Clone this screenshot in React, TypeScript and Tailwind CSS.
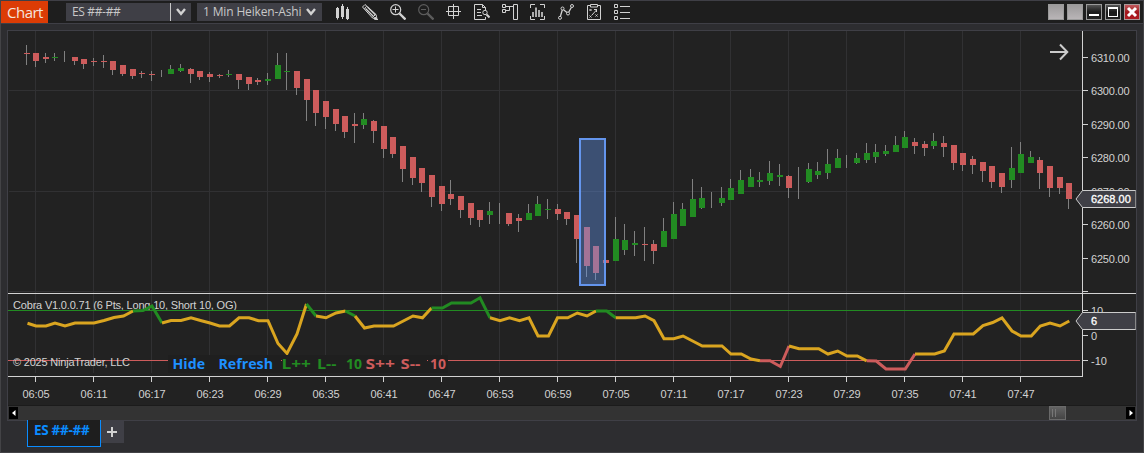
import type { ReactNode } from 'react';

// x, high, body top, body bottom, low, direction (1 up, -1 down, 0 flat)
const candles = [
  [26, 45, 53, 54, 65, -1],
  [35, 53, 53, 61, 67, -1],
  [45, 53, 57, 59, 63, -1],
  [54, 53, 57, 58, 61, 1],
  [64, 51, 57, 57, 62, 0],
  [74, 57, 57, 61, 65, -1],
  [83, 59, 59, 64, 69, -1],
  [93, 58, 61, 62, 66, -1],
  [103, 55, 61, 62, 68, -1],
  [112, 61, 61, 70, 75, -1],
  [122, 65, 65, 74, 76, -1],
  [132, 69, 69, 76, 79, -1],
  [141, 71, 73, 74, 78, -1],
  [151, 71, 74, 75, 81, -1],
  [161, 70, 74, 74, 77, 0],
  [170, 65, 69, 74, 74, 1],
  [180, 64, 68, 71, 72, 1],
  [190, 68, 69, 74, 83, -1],
  [199, 71, 71, 77, 80, -1],
  [209, 72, 74, 77, 82, -1],
  [219, 74, 75, 76, 78, -1],
  [228, 70, 74, 75, 77, 1],
  [238, 74, 74, 80, 89, -1],
  [248, 77, 77, 84, 90, -1],
  [257, 78, 80, 82, 85, -1],
  [267, 73, 79, 81, 85, 1],
  [277, 53, 65, 79, 79, 1],
  [286, 53, 71, 72, 90, 1],
  [296, 71, 71, 88, 95, -1],
  [306, 79, 79, 100, 121, -1],
  [315, 90, 90, 113, 126, -1],
  [325, 101, 101, 117, 129, -1],
  [335, 109, 109, 124, 131, -1],
  [344, 116, 116, 132, 138, -1],
  [354, 113, 124, 126, 143, -1],
  [363, 113, 119, 125, 129, 1],
  [373, 120, 121, 131, 143, -1],
  [383, 126, 126, 149, 158, -1],
  [392, 137, 137, 154, 158, -1],
  [402, 146, 146, 169, 182, -1],
  [412, 157, 157, 178, 185, -1],
  [421, 168, 168, 183, 192, -1],
  [431, 175, 175, 197, 207, -1],
  [441, 186, 186, 204, 211, -1],
  [450, 180, 194, 199, 205, -1],
  [460, 196, 196, 210, 218, -1],
  [470, 203, 203, 218, 225, -1],
  [479, 210, 210, 220, 227, -1],
  [489, 202, 211, 215, 224, 1],
  [499, 203, 213, 213, 224, 0],
  [508, 213, 213, 224, 226, -1],
  [518, 214, 218, 221, 232, -1],
  [528, 204, 213, 220, 220, 1],
  [537, 196, 204, 216, 216, 1],
  [547, 199, 209, 210, 219, 1],
  [557, 204, 209, 214, 220, -1],
  [566, 212, 212, 219, 225, -1],
  [576, 215, 215, 239, 263, -1],
  [586, 227, 227, 266, 277, -1],
  [595, 246, 246, 273, 280, -1],
  [605, 250, 260, 263, 266, -1],
  [615, 217, 239, 261, 261, 1],
  [624, 224, 240, 250, 255, 1],
  [634, 231, 243, 245, 256, 1],
  [644, 227, 244, 245, 261, -1],
  [653, 240, 244, 251, 264, -1],
  [663, 218, 231, 247, 247, 1],
  [673, 202, 214, 239, 239, 1],
  [682, 203, 209, 226, 226, 1],
  [692, 179, 199, 217, 217, 1],
  [701, 187, 198, 208, 209, 1],
  [711, 192, 200, 200, 208, 0],
  [721, 187, 198, 203, 206, 1],
  [730, 179, 188, 200, 200, 1],
  [740, 170, 180, 194, 194, 1],
  [750, 169, 177, 187, 187, 1],
  [759, 172, 180, 182, 187, 1],
  [769, 161, 173, 181, 185, 1],
  [779, 164, 175, 177, 186, 1],
  [788, 175, 176, 188, 198, -1],
  [798, 167, 180, 180, 199, 0],
  [808, 163, 169, 182, 183, 1],
  [817, 162, 171, 175, 179, 1],
  [827, 149, 164, 173, 179, 1],
  [837, 149, 158, 168, 168, 1],
  [846, 155, 160, 160, 168, 0],
  [856, 153, 158, 163, 164, 1],
  [866, 143, 153, 160, 163, 1],
  [875, 144, 152, 157, 163, 1],
  [885, 145, 151, 154, 156, 1],
  [895, 136, 145, 152, 152, 1],
  [904, 131, 137, 148, 148, 1],
  [914, 138, 142, 146, 154, -1],
  [924, 141, 144, 148, 156, -1],
  [933, 133, 141, 146, 149, 1],
  [943, 136, 143, 147, 157, -1],
  [953, 145, 145, 163, 170, -1],
  [962, 153, 153, 165, 171, -1],
  [972, 156, 159, 165, 174, -1],
  [982, 162, 162, 171, 182, -1],
  [991, 166, 166, 182, 188, -1],
  [1001, 173, 173, 187, 193, -1],
  [1011, 147, 168, 180, 188, 1],
  [1020, 142, 154, 173, 173, 1],
  [1030, 151, 157, 163, 163, 1],
  [1039, 157, 160, 173, 189, -1],
  [1049, 166, 166, 188, 197, -1],
  [1059, 177, 177, 188, 194, -1],
  [1068, 183, 183, 199, 209, -1],
];

const GOLD = '#daa520';
const GREEN = '#228b22';
const RED = '#cd5c5c';

const cobra = [
  { color: GOLD, points: '27.5,323.3 36,326 46,326 55,323 65,326 75,323 94,323 104,320.5 114,317.5 123.5,316 133,311' },
  { color: GREEN, points: '133,311 143,310.5 152,306 162,323' },
  { color: GOLD, points: '162,323 171,320.5 181,320.5 191,317.8 200.5,320.5 210,323 219.5,326 229.5,326 239,317.8 249,317.8 258.5,320.7 268,320.7 278,343.5 287,353.5 297,334 306.5,304' },
  { color: GREEN, points: '306.5,304 316,316' },
  { color: GOLD, points: '316,316 326,317.8 336,313 345.5,311' },
  { color: GREEN, points: '345.5,311 355,316' },
  { color: GOLD, points: '355,316 364.5,328 374,326 393.5,326 413,316 422.5,317.8 431.5,308' },
  { color: GREEN, points: '431.5,308 442.5,308 451.5,303 471,303 480,297.8 490,317.8' },
  { color: GOLD, points: '490,317.8 500,320.7 509.5,317.8 519.5,320.7 529,317.8 538,336 548.5,336 557.5,317.8 567.7,317.8 577.3,313 587,316 596,311' },
  { color: GREEN, points: '596,311 606.7,311 615.7,317.8' },
  { color: GOLD, points: '615.7,317.8 635.7,317.8 645,316 654,320.7 664,338.7 673.7,338.7 683,336 702.3,346 722,346 731,354 741.3,354 751,359 760,360.8' },
  { color: RED, points: '760,360.8 770,360.8 780.3,366.5 789,346' },
  { color: GOLD, points: '789,346 799,348.7 818.7,348.7 828,354 837.7,351 847,356 857.3,356 866.7,360.8' },
  { color: RED, points: '866.7,360.8 876.3,361 886,369 905.3,369 915,354' },
  { color: GOLD, points: '915,354 934.7,354 944.3,351 954,334 973.3,334 983,325.7 992.7,322.5 1002,317.8 1012,331 1021,336 1031.3,336 1040.3,326 1050,323 1060,326 1069.3,321' },
];

const times = [
  { x: 35, label: '06:05' },
  { x: 93, label: '06:11' },
  { x: 151, label: '06:17' },
  { x: 209, label: '06:23' },
  { x: 267, label: '06:29' },
  { x: 325, label: '06:35' },
  { x: 383, label: '06:41' },
  { x: 441, label: '06:47' },
  { x: 499, label: '06:53' },
  { x: 557, label: '06:59' },
  { x: 615, label: '07:05' },
  { x: 673, label: '07:11' },
  { x: 730, label: '07:17' },
  { x: 788, label: '07:23' },
  { x: 846, label: '07:29' },
  { x: 904, label: '07:35' },
  { x: 962, label: '07:41' },
  { x: 1020, label: '07:47' },
];

const prices = [
  { y: 57, label: '6310.00' },
  { y: 90, label: '6300.00' },
  { y: 124, label: '6290.00' },
  { y: 157, label: '6280.00' },
  { y: 191, label: '6270.00' },
  { y: 224, label: '6260.00' },
  { y: 258, label: '6250.00' },
  { y: 291, label: '' },
  { y: 310, label: '10' },
  { y: 335, label: '0' },
  { y: 360, label: '-10' },
];

const legend = [
  { x: 172.5, width: 32.5, label: 'Hide', color: '#1e90ff' },
  { x: 218.5, width: 54.5, label: 'Refresh', color: '#1e90ff' },
  { x: 281.5, width: 29.5, label: 'L++', color: GREEN },
  { x: 317, width: 19.5, label: 'L--', color: GREEN },
  { x: 346, width: 16, label: '10', color: GREEN },
  { x: 365.5, width: 29.5, label: 'S++', color: RED },
  { x: 400.5, width: 20, label: 'S--', color: RED },
  { x: 430, width: 16, label: '10', color: RED },
];

const Icon = ({ children, dim }: { children: ReactNode; dim?: boolean }) => (
  <svg
    viewBox="0 0 16 16"
    className={dim ? 'size-4 text-[#5c5c5c]' : 'size-4 text-[#d2d2d2]'}
    fill="none"
    stroke="currentColor"
  >
    {children}
  </svg>
);

const ToolIcons = () => (
  <div className="flex gap-3 ml-3">
    <Icon>
      <path d="M2 4h3v10H2zM7 2h3v11H7zM12 5h3v10h-3z" fill="currentColor" stroke="none" />
      <path d="M3.5 3v12.5M8.5 0v15M13.5 3v13" />
    </Icon>
    <Icon>
      <path d="M.5 3 3 .5l11 10 1 4.5-4.5-1zM2.2 4.7l2.5-2.5M10.5 13.5l3-3" />
      <path d="m3.5 4.5 8 8M5.5 3l8 8" strokeWidth="1.3" />
      <path d="m13 13 3 3-4-1z" fill="currentColor" />
    </Icon>
    <Icon>
      <circle cx="5.7" cy="5.7" r="5" strokeWidth="1.2" />
      <path d="M5.5 2.5v6M2.5 5.5h6" />
      <path d="m9.5 9.5 6 6" strokeWidth="2.4" />
    </Icon>
    <Icon dim>
      <circle cx="5.7" cy="5.7" r="5" strokeWidth="1.2" />
      <path d="M3 5.5h5" />
      <path d="m9.5 9.5 6 6" strokeWidth="2.4" />
    </Icon>
    <Icon>
      <path d="M2.5 2.5h10v9h-10zM7.5 0v15M0 7.5h15" />
    </Icon>
    <Icon>
      <path d="M11.5 6V3.5l-3-3h-8v15h11V13M8.5.5v3h3M3 5.5h4M3 8.5h4M3 11.5h5" />
      <circle cx="11" cy="8.5" r="2.2" />
      <path d="m12.5 10.5 3 3" strokeWidth="2" />
    </Icon>
    <Icon>
      <path d="M.5.5h3v3h-3zM.5 5.5h3v3h-3zM11.5.5h4v15h-4zM4 2.5h7M4 6.5h3.5v-4" />
    </Icon>
    <Icon>
      <path d="M.5 4V.5H5M10 .5h4.5V4M.5 12v3.5H5M10 15.500h4.5V12" />
      <path d="M3 8v5M6 3.5V13M9 6v7M12 8v5" strokeWidth="1.6" />
    </Icon>
    <Icon>
      <circle cx="2" cy="13.8" r="1.5" />
      <circle cx="4.5" cy="4.5" r="1.5" />
      <circle cx="10" cy="9.5" r="1.5" />
      <circle cx="14" cy="2" r="1.5" />
      <path d="m2.5 12 1.8-6M5.5 5.7 9 8.5M10.8 8l2.5-4.5" strokeWidth="1.3" />
    </Icon>
    <Icon>
      <path d="M4.5 1.500h-3v14h13v-14h-3M4.5.5h7V3h-7zM10.5 5v3M8 5.500h3M6 11l4.5-5" />
      <path d="m3.5 5 2 2m0-2-2 2M3.5 11.500l2 2m0-2-2 2M9.500 10.500l2 2m0-2-2 2" />
    </Icon>
    <Icon>
      <path d="M.5.5h3v3h-3zM.5 6.500h3v3h-3zM.5 12.500h3v3h-3zM6 2.500h10M6 8.500h10M6 14.500h10" />
    </Icon>
  </div>
);

const Chevron = () => (
  <svg viewBox="0 0 10 8" className="w-[10px] h-2 shrink-0" fill="none" stroke="#d2d2d2" strokeWidth="2.4">
    <path d="m1 1 4 4.800L9 1" />
  </svg>
);

const WindowButtons = () => (
  <div className="ml-auto mr-[3px] flex gap-[3px]">
    <div className="size-4 border border-[#9a9a9a] bg-linear-to-b from-[#9c9a9b] to-[#b9b5b7]" />
    <div className="size-4 border border-[#9a9a9a] bg-linear-to-b from-[#9c9a9b] to-[#b9b5b7]" />
    <div className="size-4 border border-[#9a9a9a] bg-linear-to-b from-[#555] via-[#1a1a1a] to-[#222]">
      <div className="mt-[9px] mx-auto h-0.5 w-[10px] bg-white" />
    </div>
    <div className="size-4 border border-[#9a9a9a] bg-linear-to-b from-[#555] via-[#1a1a1a] to-[#222]">
      <div className="mt-0.5 mx-auto h-[10px] w-[10px] border border-t-2 border-white" />
    </div>
    <div className="size-4 border border-[#a99] bg-linear-to-b from-[#c0575c] via-[#a3161c] to-[#b01c22]">
      <svg viewBox="0 0 14 14" className="size-[14px]" stroke="#fff" strokeWidth="3">
        <path d="m3 3 8 8M11 3l-8 8" />
      </svg>
    </div>
  </div>
);

const Toolbar = () => (
  <div className="flex h-6 items-center border-y border-[#3f3f46] bg-[#1e1e1e] text-[#c8c8c8]">
    <div className="h-[22px] w-[47px] bg-[#dc3c05] pl-1.5 text-[15px] leading-[22px] tracking-[-0.5px] text-[#f4e4de]">
      Chart
    </div>
    <div className="ml-[18px] flex h-[18px] w-[125px] items-center bg-[#3f3f46] text-xs">
      <span className="w-[104px] pl-1.5 tracking-[-0.35px]">ES ##-##</span>
      <div className="flex h-full flex-1 items-center justify-center border-l border-[#c8c8c8]">
        <Chevron />
      </div>
    </div>
    <div className="ml-1.5 flex h-[18px] w-[125px] items-center justify-between bg-[#3f3f46] px-1.5 text-xs">
      <span className="whitespace-nowrap tracking-[-0.15px]">1 Min Heiken-Ashi</span>
      <Chevron />
    </div>
    <ToolIcons />
    <WindowButtons />
  </div>
);

const Marker = ({ y, label }: { y: number; label: string }) => (
  <g>
    <path d={`M1076 ${y}l6.5-8.5h53v17h-53z`} fill="#3f3f46" stroke="#ccc" />
    <path d={`M1135.5 ${y - 8}v16`} stroke="#888" />
    <text x="1091" y={y + 4} fill="#fff" stroke="#fff" strokeWidth="0.3">
      {label}
    </text>
  </g>
);

const Chart = () => (
  <svg
    viewBox="8 31 1128 374"
    className="block h-[374px] w-[1128px] font-['Liberation_Sans',Arial,sans-serif] text-[11px]"
  >
    {/* grid */}
    <g fill="#313133">
      {times.map((t) => (
        <path key={t.x} d={`M${t.x} 31h1v262h-1zM${t.x} 294h1v79h-1z`} />
      ))}
      <path d="M9 90h1073v1H9zM9 191h1073v1H9zM9 291h1073v1H9z" />
    </g>

    {/* price bars */}
    {candles.map(([x, high, top, bottom, low, dir]) => (
      <g key={x}>
        <rect x={x} y={high} width="1" height={low - high} fill="#808080" />
        {dir !== 0 && (
          <rect x={x - 2} y={top} width="6" height={bottom - top} fill={dir > 0 ? GREEN : RED} />
        )}
      </g>
    ))}
    <rect x="580" y="139" width="25" height="146" fill="#6495ed" fillOpacity="0.4" stroke="#6495ed" strokeWidth="2" />
    <path d="M1050 52h17M1060 44.5l7.3 7.5-7.3 7.5" fill="none" stroke="#ccc" strokeWidth="2" />

    {/* indicator */}
    <text x="13" y="309" fill="#d2d2d2" textLength="224">
      Cobra V1.0.0.71 (6 Pts, Long 10, Short 10, OG)
    </text>
    <rect x="8" y="310" width="1072" height="1" fill={GREEN} />
    <rect x="8" y="360" width="1072" height="1" fill={RED} />
    {cobra.map((c) => (
      <polyline key={c.points} points={c.points} fill="none" stroke={c.color} strokeWidth="3" />
    ))}
    <text x="13" y="366" fill="#d2d2d2" textLength="117">
      © 2025 NinjaTrader, LLC
    </text>
    <rect x="168" y="355" width="280" height="18" fill="#1f1f1f" />
    <path d="M281 360h1v1h-1zM427 360h1v1h-1z" fill={RED} />
    <g className="font-['Open_Sans','Noto_Sans',sans-serif] text-[14.5px] font-bold">
      {legend.map((l) => (
        <text key={l.x} x={l.x} y="368.5" fill={l.color} textLength={l.width} lengthAdjust="spacingAndGlyphs">
          {l.label}
        </text>
      ))}
    </g>

    {/* axes */}
    <g fill="#d2d2d2">
      <rect x="8" y="293" width="1128" height="1" />
      <rect x="8" y="376" width="1075" height="1" />
      <rect x="1082" y="31" width="1" height="346" />
      {times.map((t) => (
        <g key={t.x}>
          <rect x={t.x} y="376" width="1" height="6" />
          <text x={t.x + 1} y="398" textAnchor="middle" textLength="27">
            {t.label}
          </text>
        </g>
      ))}
      {prices.map((p) => (
        <g key={p.y}>
          <rect x="1082" y={p.y} width="6" height="1" />
          <text x="1091" y={p.y + 5} textLength={p.label.length === 7 ? 38.5 : undefined}>
            {p.label}
          </text>
        </g>
      ))}
    </g>
    <Marker y={199} label="6268.00" />
    <Marker y={321} label="6" />
  </svg>
);

const Scrollbar = () => (
  <div className="flex h-[15px] items-center border-t border-[#1b1b1b] bg-[#333] px-px">
    <div className="flex h-3 w-[9px] items-center justify-center bg-black">
      <svg viewBox="0 0 4 6" className="h-1.5 w-1" fill="#fff">
        <path d="M3.5 0v6L0 3z" />
      </svg>
    </div>
    <div className="ml-auto mr-[60px] flex h-[14px] w-[17px] gap-0.5 border border-[#6a6a6a] bg-linear-to-b from-[#636363] to-[#444] p-0.5">
      <div className="w-px bg-[#777]" />
      <div className="w-px bg-[#777]" />
    </div>
    <div className="flex h-3 w-[9px] items-center justify-center bg-black">
      <svg viewBox="0 0 4 6" className="h-1.5 w-1" fill="#fff">
        <path d="M.5 0v6L4 3z" />
      </svg>
    </div>
  </div>
);

const Tabs = () => (
  <div className="-mt-px ml-[26px] flex items-start">
    <div className="h-[27px] w-[74px] whitespace-nowrap border border-t-0 border-[#0a8cff] bg-[#1e1e1e] pl-1.5 text-[13.5px] font-bold leading-5 text-[#0a8cff]">
      <span className="tracking-[-0.3px]">ES ##-##</span>
    </div>
    <div className="flex h-[23px] w-[23px] items-center justify-center bg-[#3f3f46] pr-0.5 pt-px">
      <svg viewBox="0 0 10 10" className="size-[10px]" stroke="#d2d2d2" strokeWidth="2">
        <path d="M5 0v10M0 5h10" />
      </svg>
    </div>
  </div>
);

const App = () => {
  return (
    <div className="flex h-[453px] w-[1144px] flex-col overflow-hidden border-x border-b border-[#434346] bg-[#2d2d30] font-['Open_Sans','Noto_Sans',sans-serif]">
      <Toolbar />
      <div className="ml-1.5 mt-1.5 w-[1130px] border border-[#3f3f46] bg-[#222]">
        <Chart />
        <Scrollbar />
      </div>
      <Tabs />
    </div>
  );
};

export default App;
